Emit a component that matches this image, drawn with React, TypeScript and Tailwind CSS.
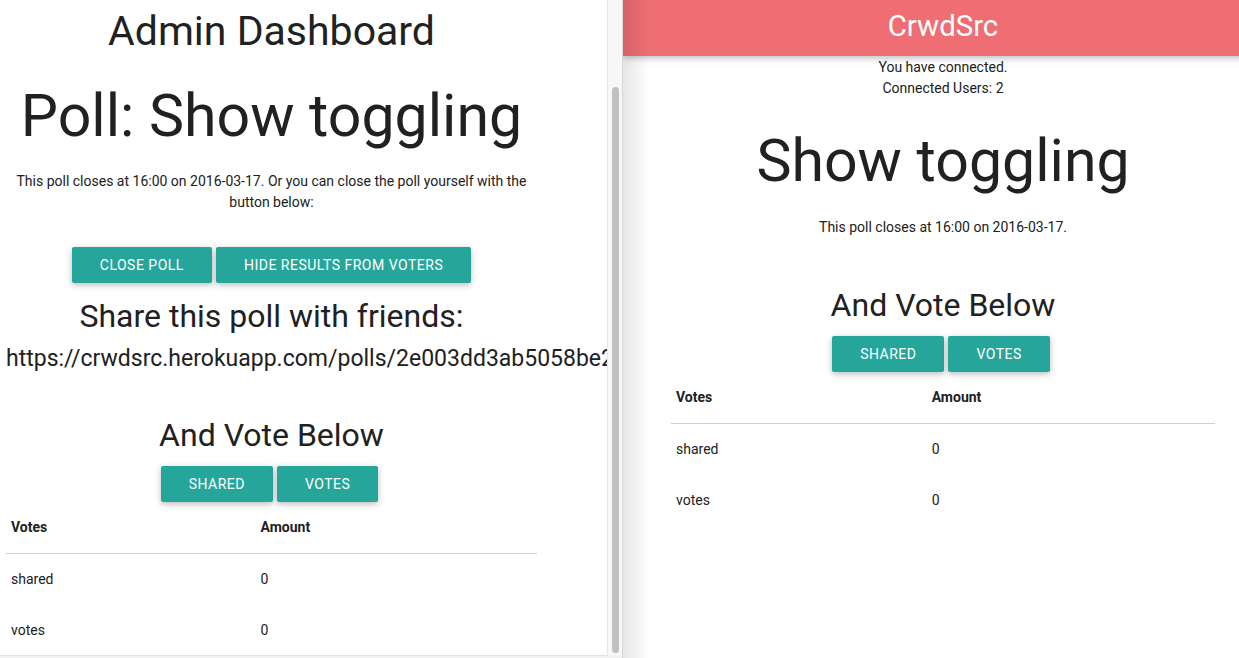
import React from "react";

const btn =
  "h-9 px-7 rounded-[2px] bg-[#26a69a] text-white text-[14px] uppercase tracking-[0.5px] leading-9 whitespace-nowrap shadow-[0_2px_5px_0_rgba(0,0,0,0.16),0_2px_10px_0_rgba(0,0,0,0.12)]";

const cell = "px-[5px] py-[15px]";

function VoteButtons() {
  return (
    <div className="flex justify-center gap-1 pr-1">
      <button className={btn}>Shared</button>
      <button className={btn}>Votes</button>
    </div>
  );
}

function VoteTable() {
  const rows = [
    { name: "shared", amount: 0 },
    { name: "votes", amount: 0 },
  ];
  return (
    <table className="w-full border-collapse text-left text-[14px] leading-[21px]">
      <thead className="border-b border-[#d0d0d0]">
        <tr>
          <th className={`${cell} w-[47%] font-bold`}>Votes</th>
          <th className={`${cell} font-bold`}>Amount</th>
        </tr>
      </thead>
      <tbody>
        {rows.map((r) => (
          <tr key={r.name}>
            <td className={cell}>{r.name}</td>
            <td className={cell}>{r.amount}</td>
          </tr>
        ))}
      </tbody>
    </table>
  );
}

export default function App() {
  return (
    <div className="flex h-[658px] w-[1239px] overflow-hidden bg-[#f2f2f2] font-['Roboto',sans-serif] text-[#212121]">
      {/* Admin window */}
      <div className="h-[656px] w-[607px] shrink-0 overflow-hidden border-b border-[#e2e2e2] bg-white">
        <div className="ml-[6px] w-[531px] text-center">
          <h3 className="pt-[9px] text-[41px] leading-[45px]">Admin Dashboard</h3>
          <h1 className="mt-[29px] text-[59px] leading-[65px]">Poll: Show toggling</h1>
          <p className="mt-[23px] text-[14px] leading-[21px]">
            This poll closes at 16:00 on 2016-03-17. Or you can close the poll yourself with the button below:
          </p>
          <div className="mt-[34px] flex justify-center gap-1">
            <button className={btn}>Close Poll</button>
            <button className={btn}>Hide results from voters</button>
          </div>
          <h4 className="mt-[16px] text-[32px] leading-[35px]">Share this poll with friends:</h4>
          <p className="mt-[12px] whitespace-nowrap text-[23px] leading-[25px]">
            https://crwdsrc.herokuapp.com/polls/2e003dd3ab5058be2f41c9
          </p>
          <h4 className="mt-[47px] text-[32px] leading-[35px]">And Vote Below</h4>
          <div className="mt-[13px]">
            <VoteButtons />
          </div>
          <VoteTable />
        </div>
      </div>

      {/* scrollbar */}
      <div className="flex h-[656px] w-[15px] shrink-0 justify-center border-l border-[#e6e6e6] bg-[#f7f7f7] pt-[87px]">
        <div className="h-[566px] w-[7px] rounded-full bg-[#c1c1c1]" />
      </div>

      {/* Voter window */}
      <div className="relative h-[658px] flex-1 overflow-hidden border-l border-[#d9d9d9] bg-white">
        <div className="w-[640px]">
          <nav className="h-[56px] bg-[#ee6e73] text-center text-[29.4px] leading-[52px] text-white shadow-[0_2px_5px_0_rgba(0,0,0,0.16),0_2px_10px_0_rgba(0,0,0,0.12)]">
            CrwdSrc
          </nav>
          <div className="mx-auto w-[85%] pt-px text-center">
            <p className="text-[14px] leading-[21px]">You have connected.</p>
            <p className="text-[14px] leading-[21px]">Connected Users: 2</p>
            <h1 className="mt-[29px] text-[59px] leading-[65px]">Show toggling</h1>
            <p className="mt-[24px] text-[14px] leading-[21px]">This poll closes at 16:00 on 2016-03-17.</p>
            <h4 className="mt-[50px] text-[32px] leading-[35px]">And Vote Below</h4>
            <div className="mt-[13px]">
              <VoteButtons />
            </div>
            <VoteTable />
          </div>
        </div>
        <div className="pointer-events-none absolute inset-y-0 left-0 w-[26px] bg-linear-to-r from-black/10 to-transparent" />
      </div>
    </div>
  );
}
